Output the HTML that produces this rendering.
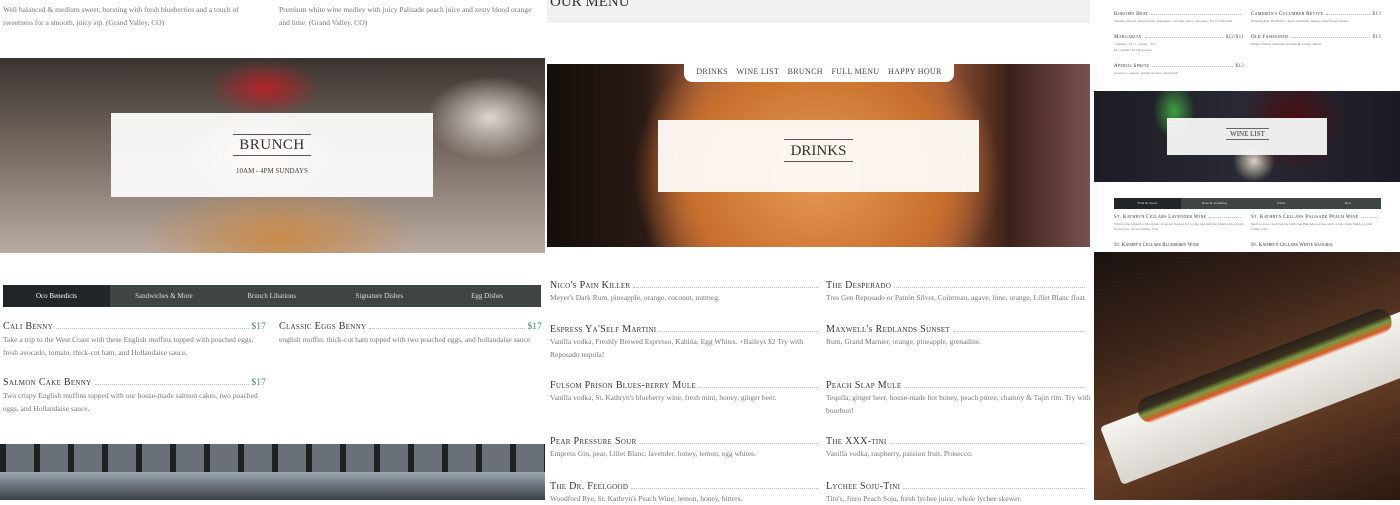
<!DOCTYPE html>
<html><head><meta charset="utf-8"><style>
*{margin:0;padding:0;box-sizing:border-box}
body{width:1400px;height:500px;overflow:hidden;background:#fff;position:relative;font-family:"Liberation Serif",serif;color:#444}
.a{position:absolute}
.row{position:absolute;display:flex;align-items:baseline;font-variant:small-caps;color:#333;letter-spacing:.3px;white-space:nowrap}
.row .f{flex:1;border-bottom:1px dotted #bbb;margin:0 3px}
.row .p{color:#3a7a6a;font-variant:normal}
.desc{color:#777;font-size:7.5px;line-height:13px}
</style></head><body>

<!-- LEFT COLUMN -->
<div class="a desc" style="left:3px;top:3px;width:250px">Well balanced &amp; medium sweet, bursting with fresh blueberries and a touch of sweetness for a smooth, juicy sip. (Grand Valley, CO)</div>
<div class="a desc" style="left:279px;top:3px;width:265px">Premium white wine medley with juicy Palisade peach juice and zesty blood orange and lime. (Grand Valley, CO)</div>

<div class="a" style="left:0;top:58px;width:545px;height:195px;background:
radial-gradient(ellipse 120px 60px at 260px 95px,#f4d0a0,transparent 70%),
radial-gradient(ellipse 80px 40px at 265px 30px,#b2232a,transparent 70%),
radial-gradient(ellipse 90px 60px at 490px 60px,#ded8d0,transparent 70%),
radial-gradient(ellipse 200px 80px at 280px 180px,#c98a4a,transparent 70%),
linear-gradient(180deg,#3a3430 0%,#7b6d65 50%,#b9aca3 100%)"></div>
<div class="a" style="left:111px;top:113px;width:322px;height:84px;background:rgba(255,255,255,.92)"></div>
<div class="a" style="left:233px;top:134px;width:78px;height:22px;border-top:1px solid #555;border-bottom:1px solid #555;text-align:center;font-size:15px;line-height:20px;color:#333;letter-spacing:.5px">BRUNCH</div>
<div class="a" style="left:111px;top:167px;width:322px;text-align:center;font-size:7px;color:#444">10AM - 4PM SUNDAYS</div>

<div class="a" style="left:3px;top:285px;width:538px;height:22px;background:#3f4543;display:flex;font-size:7px;color:#ddd;line-height:22px">
<div style="width:107px;background:#222628;text-align:center;color:#fff">Oco Benedicts</div>
<div style="flex:1;text-align:center">Sandwiches &amp; More</div>
<div style="flex:1;text-align:center">Brunch Libations</div>
<div style="flex:1;text-align:center">Signature Dishes</div>
<div style="flex:1;text-align:center">Egg Dishes</div>
</div>
<div class="a" style="left:52px;top:303px;width:0;height:0;border:4px solid transparent;border-bottom-color:#fff"></div>

<div class="row" style="left:3px;top:321px;width:263px;font-size:10px">Cali Benny<span class="f"></span><span class="p" style="font-size:9px">$17</span></div>
<div class="a desc" style="left:3px;top:333px;width:255px">Take a trip to the West Coast with these English muffins topped with poached eggs, fresh avocado, tomato, thick-cut ham, and Hollandaise sauce.</div>
<div class="row" style="left:279px;top:321px;width:263px;font-size:10px">Classic Eggs Benny<span class="f"></span><span class="p" style="font-size:9px">$17</span></div>
<div class="a desc" style="left:279px;top:333px;width:265px">english muffin, thick-cut ham topped with two poached eggs, and hollandaise sauce</div>
<div class="row" style="left:3px;top:377px;width:263px;font-size:10px">Salmon Cake Benny<span class="f"></span><span class="p" style="font-size:9px">$17</span></div>
<div class="a desc" style="left:3px;top:389px;width:255px">Two crispy English muffins topped with our house-made salmon cakes, two poached eggs, and Hollandaise sauce.</div>

<div class="a" style="left:0;top:444px;width:545px;height:56px;background:repeating-linear-gradient(90deg,#1e2022 0 6px,#6a7078 6px 34px),#333"></div>
<div class="a" style="left:0;top:472px;width:545px;height:28px;background:linear-gradient(180deg,#9aa6b0,#3a3f44)"></div>

<!-- MIDDLE COLUMN -->
<div class="a" style="left:547px;top:0;width:543px;height:23px;background:#f0f0f0"></div>
<div class="a" style="left:550px;top:-6px;font-size:15px;color:#333">OUR MENU</div>
<div class="a" style="left:547px;top:64px;width:543px;height:183px;background:
radial-gradient(ellipse 230px 200px at 270px 110px,#e89a55,#c8702e 55%,transparent 80%),
linear-gradient(90deg,#140e0a 0%,#2a1a14 18%,#a05a3a 30%,#a05a3a 72%,#3a2018 85%,#7a5050 100%)"></div>
<div class="a" style="left:684px;top:60px;width:270px;height:22px;background:#fff;border-radius:0 0 8px 8px;font-size:8px;color:#444;display:flex;justify-content:space-around;align-items:center;padding:0 8px;letter-spacing:.3px">
<span>DRINKS</span><span>WINE LIST</span><span>BRUNCH</span><span>FULL MENU</span><span>HAPPY HOUR</span></div>
<div class="a" style="left:658px;top:120px;width:321px;height:72px;background:rgba(253,250,246,.96)"></div>
<div class="a" style="left:784px;top:139px;width:69px;height:23px;border-top:1px solid #555;border-bottom:1px solid #555;text-align:center;font-size:15px;line-height:22px;color:#333">DRINKS</div>

<div class="row" style="left:550px;top:280px;width:272px;font-size:10px">Nico's Pain Killer<span class="f"></span></div>
<div class="a desc" style="left:550px;top:291px;width:270px">Meyer's Dark Rum, pineapple, orange, coconut, nutmeg.</div>
<div class="row" style="left:826px;top:280px;width:262px;font-size:10px">The Desperado<span class="f"></span></div>
<div class="a desc" style="left:826px;top:291px;width:266px">Tres Gen Reposado or Patrón Silver, Cointreau, agave, lime, orange, Lillet Blanc float.</div>

<div class="row" style="left:550px;top:324px;width:272px;font-size:10px">Espress Ya'Self Martini<span class="f"></span></div>
<div class="a desc" style="left:550px;top:335px;width:255px">Vanilla vodka, Freshly Brewed Espresso, Kahlúa, Egg Whites. +Baileys $2 Try with Reposado tequila!</div>
<div class="row" style="left:826px;top:324px;width:262px;font-size:10px">Maxwell's Redlands Sunset<span class="f"></span></div>
<div class="a desc" style="left:826px;top:335px;width:264px">Rum, Grand Marnier, orange, pineapple, grenadine.</div>

<div class="row" style="left:550px;top:380px;width:272px;font-size:10px">Fulsom Prison Blues-berry Mule<span class="f"></span></div>
<div class="a desc" style="left:550px;top:391px;width:270px">Vanilla vodka, St. Kathryn's blueberry wine, fresh mint, honey, ginger beer.</div>
<div class="row" style="left:826px;top:380px;width:262px;font-size:10px">Peach Slap Mule<span class="f"></span></div>
<div class="a desc" style="left:826px;top:391px;width:266px">Tequila, ginger beer, house-made hot honey, peach puree, chamoy &amp; Tajin rim. Try with bourbon!</div>

<div class="row" style="left:550px;top:436px;width:272px;font-size:10px">Pear Pressure Sour<span class="f"></span></div>
<div class="a desc" style="left:550px;top:447px;width:270px">Empress Gin, pear, Lillet Blanc, lavender, honey, lemon, egg whites.</div>
<div class="row" style="left:826px;top:436px;width:262px;font-size:10px">The XXX-tini<span class="f"></span></div>
<div class="a desc" style="left:826px;top:447px;width:264px">Vanilla vodka, raspberry, passion fruit, Prosecco.</div>

<div class="row" style="left:550px;top:481px;width:272px;font-size:10px">The Dr. Feelgood<span class="f"></span></div>
<div class="a desc" style="left:550px;top:492px;width:270px">Woodford Rye, St. Kathryn's Peach Wine, lemon, honey, bitters.</div>
<div class="row" style="left:826px;top:481px;width:262px;font-size:10px">Lychee Soju-Tini<span class="f"></span></div>
<div class="a desc" style="left:826px;top:492px;width:264px">Tito's, Jinro Peach Soju, fresh lychee juice, whole lychee skewer.</div>

<!-- RIGHT COLUMN -->
<div style="position:absolute;left:1114px;top:0;width:270px;height:90px;font-size:3.5px;color:#777;line-height:5px">
<div class="row" style="left:0;top:12px;width:130px;font-size:5px">Kokomo Heat<span class="f"></span></div>
<div class="a" style="top:19px;width:130px;white-space:nowrap;overflow:hidden">Tequila, mezcal, passion fruit, pineapple, coconut, agave, habanero. Try it with rum!</div>
<div class="row" style="left:137px;top:12px;width:130px;font-size:5px">Cameron's Cucumber Revive<span class="f"></span><span style="color:#555">$13</span></div>
<div class="a" style="left:137px;top:19px;width:130px;white-space:nowrap;overflow:hidden">Empress Gin, Hendrick's, fresh cucumber, lemon, elderflower liqueur.</div>
<div class="row" style="left:0;top:35px;width:130px;font-size:5px">Margarita<span class="f"></span><span style="color:#555">$12/$11</span></div>
<div class="a" style="top:42px">- regular - $11 | - classic - $11</div><div class="a" style="top:48px">$11 capital / $11 Reposado</div>
<div class="row" style="left:137px;top:35px;width:130px;font-size:5px">Old Fashioned<span class="f"></span><span style="color:#555">$13</span></div>
<div class="a" style="left:137px;top:42px;width:130px;white-space:nowrap;overflow:hidden">Maker's Mark, Amarena cherries &amp; orange, bitters</div>
<div class="row" style="left:0;top:64px;width:130px;font-size:5px">Aperol Spritz<span class="f"></span><span style="color:#555">$12</span></div>
<div class="a" style="top:71px">prosecco - aperol - splash of soda - fresh fruit</div>
</div>

<div class="a" style="left:1094px;top:91px;width:306px;height:91px;background:
radial-gradient(ellipse 30px 40px at 80px 20px,#3fa040,transparent 70%),
radial-gradient(ellipse 70px 70px at 200px 30px,#4a0c12,transparent 75%),
radial-gradient(ellipse 30px 30px at 160px 70px,#d8d0c0,transparent 70%),
linear-gradient(90deg,#1c1c24,#2a2a34 50%,#1c1a22)"></div>
<div class="a" style="left:1167px;top:118px;width:160px;height:37px;background:rgba(245,245,245,.96)"></div>
<div class="a" style="left:1226px;top:128px;width:43px;height:12px;border-top:1px solid #666;border-bottom:1px solid #666;text-align:center;font-size:7px;line-height:11px;color:#333">WINE LIST</div>

<div class="a" style="left:1114px;top:198px;width:267px;height:11px;background:#3f4543;display:flex;font-size:3.5px;color:#ddd;line-height:11px">
<div style="width:67px;background:#222628;text-align:center">Fruit &amp; Sweet</div>
<div style="flex:1;text-align:center">Rosé &amp; Sparkling</div>
<div style="flex:1;text-align:center">White</div>
<div style="flex:1;text-align:center">Red</div></div>
<div style="position:absolute;left:1114px;top:215px;width:270px;font-size:3.5px;color:#777;line-height:5px">
<div class="row" style="left:0;top:0;width:130px;font-size:5px">St. Kathryn Cellars Lavender Wine<span class="f"></span></div>
<div class="a" style="top:7px;width:130px">White wine infused with organic lavender flowers for a crisp and delicate finish with a fruity floral nose. (Grand Valley, CO)</div>
<div class="row" style="left:137px;top:0;width:130px;font-size:5px">St. Kathryn Cellars Palisade Peach Wine<span class="f"></span></div>
<div class="a" style="left:137px;top:7px;width:130px">Mellow sweet and fragrant with ripe Palisade peaches and a crisp, clean finish. (Grand Valley, CO)</div>
<div class="a" style="top:28px;font-size:5px;font-variant:small-caps;color:#333">St. Kathryn Cellars Blueberry Wine</div>
<div class="a" style="left:137px;top:28px;font-size:5px;font-variant:small-caps;color:#333">St. Kathryn Cellars White Sangria</div>
</div>

<div class="a" style="left:1094px;top:252px;width:306px;height:248px;overflow:hidden;background:
linear-gradient(160deg,#1a1210 0%,#3a2418 30%,#6a4028 60%,#2a1810 100%)">
<div class="a" style="left:6px;top:175px;width:340px;height:62px;background:linear-gradient(180deg,#f6f4f0,#d8d4ce);transform:rotate(-21deg);transform-origin:left top;border-radius:4px"></div>
<div class="a" style="left:40px;top:150px;width:270px;height:26px;background:linear-gradient(180deg,#2a2018 0%,#3a3020 40%,#7a9a40 60%,#d85a28 85%,transparent 100%);transform:rotate(-21deg);transform-origin:left top;border-radius:13px"></div>
</div>
</body></html>
